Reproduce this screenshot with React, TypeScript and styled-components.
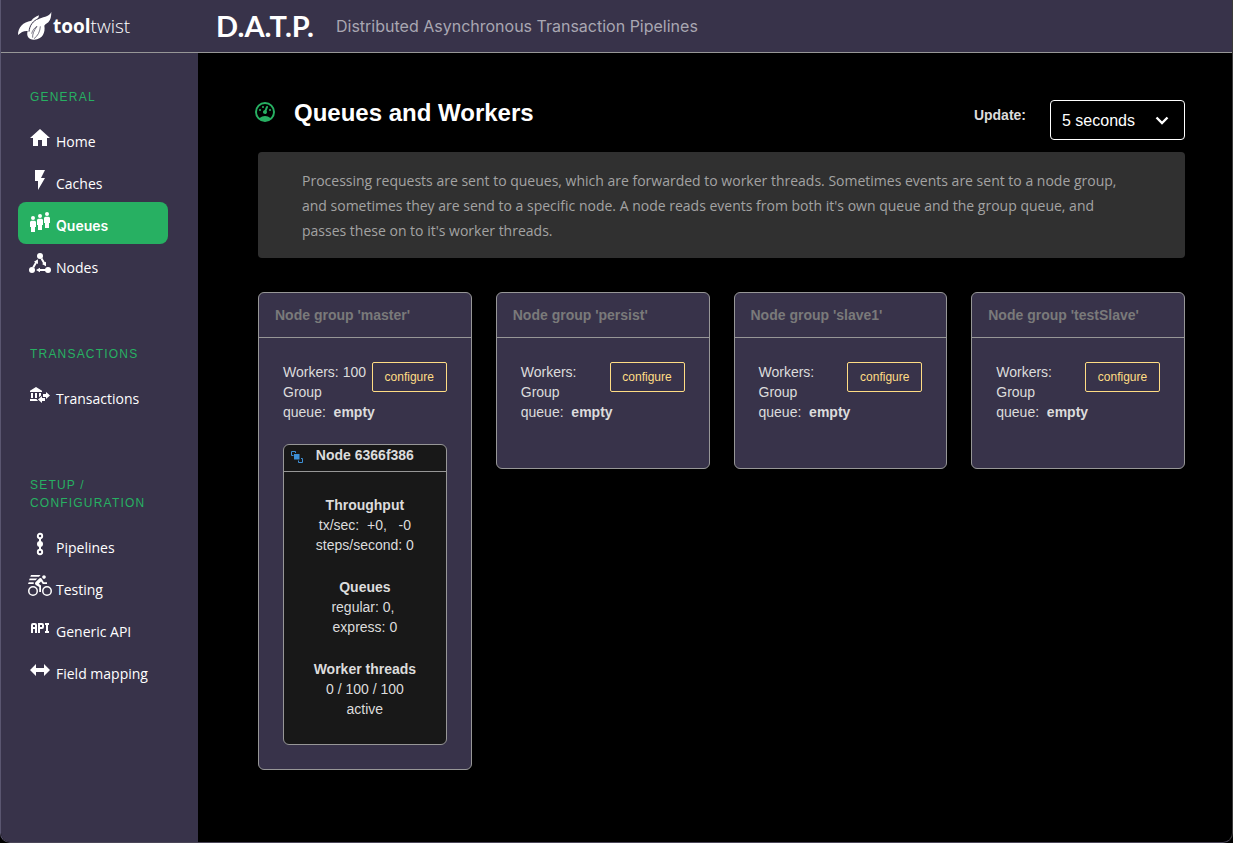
import React from 'react';
import styled, { createGlobalStyle } from 'styled-components';

const sans = '"Liberation Sans", Arial, sans-serif';
const humanist = '"Open Sans", "Noto Sans", sans-serif';
const purple = '#38334a';
const green = '#27b062';
const line = '#979797';

const GlobalStyle = createGlobalStyle`
  *, *::before, *::after { box-sizing: border-box; }
  html { background: #000; }
  body { margin: 0; font-family: ${sans}; font-size: 14px; line-height: 20px; color: #dcdcdc; }
  h1, h2, h3, h4, p, ul { margin: 0; padding: 0; font-size: inherit; }
`;

const Page = styled.div`
  display: flex;
  flex-direction: column;
  min-height: 100vh;
  background: #000;
  border-left: 1px solid #5a5670;
  border-right: 1px solid #3a3a3a;
  border-bottom: 1px solid #4a4658;
  border-radius: 0 0 10px 10px;
  overflow: hidden;
`;

const Header = styled.header`
  display: flex;
  align-items: center;
  height: 53px;
  padding-left: 16px;
  background: ${purple};
  border-bottom: 1px solid ${line};
`;

const Brand = styled.a`
  display: flex;
  align-items: center;
  gap: 1px;
  width: 199px;
  color: #fff;
  text-decoration: none;
  font-family: ${humanist};
  font-size: 19px;
  line-height: 24px;
  font-weight: 300;
  b { font-weight: 700; }
`;

const AppName = styled.span`
  color: #fff;
  font-family: Lato, sans-serif;
  font-size: 29px;
  line-height: 32px;
  font-weight: 700;
`;

const Tagline = styled.span`
  margin-left: 22px;
  color: #a9a7b2;
  font-family: Inter, sans-serif;
  font-size: 16px;
  line-height: 24px;
`;

const Body = styled.div`
  display: flex;
  flex: 1;
`;

const Sidebar = styled.nav`
  display: flex;
  flex-direction: column;
  gap: 59px;
  flex: 0 0 197px;
  padding: 35px 30px 35px 17px;
  background: ${purple};
`;

const GroupTitle = styled.h2`
  margin: 0 0 12px 12px;
  color: ${green};
  font-size: 12px;
  line-height: 18px;
  font-weight: 400;
  letter-spacing: 0.1em;
  text-transform: uppercase;
`;

const NavList = styled.ul`
  list-style: none;
`;

const NavLink = styled.a<{ $active?: boolean }>`
  display: flex;
  align-items: flex-start;
  gap: 4px;
  height: 42px;
  padding: 8px 10px;
  border-radius: 8px;
  background: ${p => (p.$active ? green : 'transparent')};
  color: #fff;
  text-decoration: none;
  font-family: ${p => (p.$active ? 'Inter, sans-serif' : humanist)};
  font-size: 14px;
  font-weight: ${p => (p.$active ? 600 : 400)};
  white-space: nowrap;
`;

const NavText = styled.span`
  margin-top: 6px;
`;

const Main = styled.main`
  flex: 1;
  min-width: 0;
  padding: 47px 47px 47px 60px;
`;

const TitleRow = styled.div`
  display: flex;
  align-items: flex-start;
  height: 52px;
`;

const GaugeIcon = styled.svg`
  margin: 0 17px 0 -5px;
`;

const Title = styled.h1`
  color: #fff;
  font-size: 24px;
  line-height: 26px;
  font-weight: 700;
`;

const UpdateLabel = styled.label`
  margin: 5px 24px 0 auto;
  font-weight: 700;
`;

const SelectBox = styled.div`
  position: relative;
  width: 135px;
  svg {
    position: absolute;
    right: 16px;
    top: 14px;
    pointer-events: none;
  }
`;

const Select = styled.select`
  appearance: none;
  width: 100%;
  height: 40px;
  padding: 0 11px;
  border: 1px solid #fff;
  border-radius: 4px;
  background: #000;
  color: #fff;
  font-family: ${sans};
  font-size: 16px;
`;

const Notice = styled.p`
  padding: 16px 44px 15px;
  border-radius: 4px;
  background: #303030;
  color: #a3a3a3;
  font-family: ${humanist};
  font-size: 14px;
  line-height: 25px;
`;

const Groups = styled.div`
  display: grid;
  grid-template-columns: repeat(4, 1fr);
  align-items: start;
  gap: 24px;
  margin-top: 34px;
`;

const GroupCard = styled.section`
  border: 1px solid ${line};
  border-radius: 6px;
  background: ${purple};
`;

const GroupHead = styled.h3`
  padding: 12px 16px;
  border-bottom: 1px solid ${line};
  color: #7a7a7a;
  font-weight: 700;
`;

const GroupBody = styled.div`
  padding: 24px;
`;

const Summary = styled.div`
  display: flex;
  justify-content: space-between;
  align-items: flex-start;
  margin-bottom: 22px;
`;

const Counts = styled.div`
  white-space: nowrap;
  width: 80px;
`;

const Configure = styled.button`
  width: 75px;
  height: 30px;
  padding: 0;
  border: 1px solid #ffdd84;
  border-radius: 2px;
  background: transparent;
  color: #ffdd84;
  font-family: ${sans};
  font-size: 12px;
`;

const NodeCard = styled.article`
  border: 1px solid ${line};
  border-radius: 6px;
  background: #181818;
  text-align: center;
`;

const NodeHead = styled.header`
  display: grid;
  grid-template-columns: 12px 1fr 12px;
  height: 27px;
  padding: 0 7px;
  border-bottom: 1px solid ${line};
  svg { margin-top: 6px; }
`;

const NodeBody = styled.div`
  display: flex;
  flex-direction: column;
  gap: 22px;
  padding: 23px 16px 25px;
`;

const Icon = ({ children }: { children: React.ReactNode }) => (
  <svg width="24" height="24" viewBox="0 0 24 24" fill="currentColor" aria-hidden="true">
    {children}
  </svg>
);

const person = (x: number, y: number) => (
  <g key={x} transform={`translate(${x} ${y})`}>
    <circle cx="0" cy="2" r="2" />
    <path d="M-1.500 4.800h3A1.500 1.500 0 0 1 3 6.300V11H2v5h-4v-5h-1V6.300A1.500 1.500 0 0 1-1.500 4.800Z" />
  </g>
);

const icons = {
  home: <path d="M10,20V14H14V20H19V12H22L12,3L2,12H5V20H10Z" />,
  flash: <path d="M7,2V13H10V22L17,10H13L17,2H7Z" />,
  queue: <>{[person(5, 6), person(12, 4), person(19, 2)]}</>,
  nodes: (
    <>
      <circle cx="12" cy="4" r="3" />
      <circle cx="4" cy="18" r="3" />
      <circle cx="20" cy="18" r="3" />
      <path
        d="M5.200 15.500L8.200 10.200M13.500 6.500L16.500 11.800M18 18H11"
        stroke="currentColor"
        strokeWidth="2"
        fill="none"
      />
      <path d="M9.900 7.200L10 12L6 9.700ZM18 14.300L14 12L18 9.700ZM8 18L12 15.700V20.300Z" />
    </>
  ),
  bank: (
    <path d="M15,14V11H18V9L22,12.5L18,16V14H15M14,7.7V9H2V7.7L8,4L14,7.7M7,10H9V15H7V10M3,10H5V15H3V10M13,10V12.5L11,14.3V10H13M9.1,16L8.5,16.5L10.2,18H2V16H9.1M17,15V18H14V20L10,16.5L14,13V15H17Z" />
  ),
  pipeline: (
    <>
      <circle cx="12" cy="4" r="2.2" fill="none" stroke="currentColor" strokeWidth="1.900" />
      <circle cx="12" cy="12" r="3" />
      <circle cx="12" cy="20" r="2.2" fill="none" stroke="currentColor" strokeWidth="1.900" />
      <path d="M11 6.500h2v11h-2z" />
    </>
  ),
  bike: (
    <path d="M5,20.5A3.5,3.5 0 0,1 1.5,17A3.5,3.5 0 0,1 5,13.5A3.5,3.5 0 0,1 8.5,17A3.5,3.5 0 0,1 5,20.5M5,12A5,5 0 0,0 0,17A5,5 0 0,0 5,22A5,5 0 0,0 10,17A5,5 0 0,0 5,12M14.8,10H19V8.2H15.8L13.86,4.93C13.57,4.43 13,4.1 12.4,4.1C11.93,4.1 11.5,4.29 11.2,4.6L7.5,8.29C7.19,8.6 7,9 7,9.5C7,10.13 7.33,10.66 7.85,10.97L11.2,13V18H13V11.5L10.75,9.85L13.07,7.5M19,20.5A3.5,3.5 0 0,1 15.5,17A3.5,3.5 0 0,1 19,13.5A3.5,3.5 0 0,1 22.5,17A3.5,3.5 0 0,1 19,20.5M19,12A5,5 0 0,0 14,17A5,5 0 0,0 19,22A5,5 0 0,0 24,17A5,5 0 0,0 19,12M16,4.8C17,4.8 17.8,4 17.8,3C17.8,2 17,1.2 16,1.2C15,1.2 14.2,2 14.2,3C14.2,4 15,4.8 16,4.8ZM3 1H12.500L11 2.800H2.300ZM1.700 4.500H9.300L7.500 6.300H1ZM.700 8.300H5.700V10H0Z" />
  ),
  api: (
    <path d="M7 7H5A2 2 0 0 0 3 9V17H5V13H7V17H9V9A2 2 0 0 0 7 7M7 11H5V9H7M14 7H10V17H12V13H14A2 2 0 0 0 16 11V9A2 2 0 0 0 14 7M14 11H12V9H14M20 9V15H21V17H17V15H18V9H17V7H21V9Z" />
  ),
  mapping: <path d="M8,14V18L2,12L8,6V10H16V6L22,12L16,18V14H8Z" />,
};

type NavItem = { icon: keyof typeof icons; text: string; active?: boolean };

const nav: { title: string; items: NavItem[] }[] = [
  {
    title: 'General',
    items: [
      { icon: 'home', text: 'Home' },
      { icon: 'flash', text: 'Caches' },
      { icon: 'queue', text: 'Queues', active: true },
      { icon: 'nodes', text: 'Nodes' },
    ],
  },
  { title: 'Transactions', items: [{ icon: 'bank', text: 'Transactions' }] },
  {
    title: 'Setup / Configuration',
    items: [
      { icon: 'pipeline', text: 'Pipelines' },
      { icon: 'bike', text: 'Testing' },
      { icon: 'api', text: 'Generic API' },
      { icon: 'mapping', text: 'Field mapping' },
    ],
  },
];

const groups: { name: string; workers?: number; node?: string }[] = [
  { name: 'master', workers: 100, node: '6366f386' },
  { name: 'persist' },
  { name: 'slave1' },
  { name: 'testSlave' },
];

const Logo = () => (
  <svg width="35" height="30" viewBox="0 0 105 90" fill="#fff" aria-hidden="true">
    <path d="M3 72C3 48 18 33 43 29C49 21 56 17 66 13C65 18 64 22 61 26C76 17 96 19 103 3C103 16 101 27 94 34C88 38 84 40 82 44C86 64 76 85 52 86C36 87 27 76 32 60C20 59 12 64 3 72Z" />
    <g fill="none" stroke={purple}>
      <path d="M65 22C48 30 38 42 36 62" strokeWidth="3" />
      <path d="M44 68C46 58 53 50 60 46C50 60 46 70 47 80" strokeWidth="2" />
      <path d="M70 46C69 62 63 74 51 83" strokeWidth="2" />
    </g>
  </svg>
);

const Node = ({ id }: { id: string }) => (
  <NodeCard>
    <NodeHead>
      <svg width="12" height="12" viewBox="0 0 12 12" fill="none" stroke="#3d8fd6" aria-hidden="true">
        <path d="M2.500 4.500H.500V.500H4.500V2M7.500 9.500V11.500H11.500V7.500H10" />
        <path d="M3 3H8.500V8.500H3Z" fill="#3d8fd6" stroke="none" />
      </svg>
      <b>Node {id}</b>
    </NodeHead>
    <NodeBody>
      <div>
        <b>Throughput</b>
        <div>tx/sec:&nbsp; +0, &nbsp; -0</div>
        <div>steps/second: 0</div>
      </div>
      <div>
        <b>Queues</b>
        <div>regular: 0,&nbsp;</div>
        <div>express: 0</div>
      </div>
      <div>
        <b>Worker threads</b>
        <div>0 / 100 / 100</div>
        <div>active</div>
      </div>
    </NodeBody>
  </NodeCard>
);

export default function App() {
  return (
    <Page>
      <GlobalStyle />
      <Header>
        <Brand href="#">
          <Logo />
          <span><b>tool</b>twist</span>
        </Brand>
        <AppName>D.A.T.P.</AppName>
        <Tagline>Distributed Asynchronous Transaction Pipelines</Tagline>
      </Header>
      <Body>
        <Sidebar>
          {nav.map(group => (
            <div key={group.title}>
              <GroupTitle>{group.title}</GroupTitle>
              <NavList>
                {group.items.map(item => (
                  <li key={item.text}>
                    <NavLink href="#" $active={item.active}>
                      <Icon>{icons[item.icon]}</Icon>
                      <NavText>{item.text}</NavText>
                    </NavLink>
                  </li>
                ))}
              </NavList>
            </div>
          ))}
        </Sidebar>
        <Main>
          <TitleRow>
            <GaugeIcon width="24" height="24" viewBox="0 0 24 24" fill={green} aria-hidden="true">
              <path d="M12,2A10,10 0 0,0 2,12A10,10 0 0,0 12,22A10,10 0 0,0 22,12A10,10 0 0,0 12,2M12,4A8,8 0 0,1 20,12C20,14.4 19,16.5 17.3,18C15.9,16.7 14,16 12,16C10,16 8.2,16.7 6.7,18C5,16.5 4,14.4 4,12A8,8 0 0,1 12,4M14,5.89C13.62,5.9 13.26,6.15 13.1,6.54L11.81,9.77L11.71,10C11,10.13 10.41,10.6 10.14,11.26C9.73,12.29 10.23,13.45 11.26,13.86C12.29,14.27 13.45,13.77 13.86,12.74C14.12,12.08 14,11.32 13.57,10.76L13.67,10.5L14.96,7.29L14.97,7.26C15.17,6.75 14.92,6.17 14.41,5.96C14.28,5.91 14.15,5.89 14,5.89M10,6A1,1 0 0,0 9,7A1,1 0 0,0 10,8A1,1 0 0,0 11,7A1,1 0 0,0 10,6M7,9A1,1 0 0,0 6,10A1,1 0 0,0 7,11A1,1 0 0,0 8,10A1,1 0 0,0 7,9M17,9A1,1 0 0,0 16,10A1,1 0 0,0 17,11A1,1 0 0,0 18,10A1,1 0 0,0 17,9Z" />
            </GaugeIcon>
            <Title>Queues and Workers</Title>
            <UpdateLabel htmlFor="interval">Update:</UpdateLabel>
            <SelectBox>
              <Select id="interval" defaultValue="5">
                <option value="5">5 seconds</option>
                <option value="10">10 seconds</option>
                <option value="30">30 seconds</option>
              </Select>
              <svg width="14" height="12" viewBox="0 0 14 12" fill="none" stroke="#fff" strokeWidth="2.400" aria-hidden="true">
                <path d="M1.500 3.500L7 9L12.500 3.500" />
              </svg>
            </SelectBox>
          </TitleRow>
          <Notice>
            Processing requests are sent to queues, which are forwarded to worker threads. Sometimes
            events are sent to a node group, and sometimes they are send to a specific node. A node
            reads events from both it's own queue and the group queue, and passes these on to it's
            worker threads.
          </Notice>
          <Groups>
            {groups.map(group => (
              <GroupCard key={group.name}>
                <GroupHead>Node group '{group.name}'</GroupHead>
                <GroupBody>
                  <Summary>
                    <Counts>
                      <div>Workers: {group.workers}</div>
                      <div>Group</div>
                      <div>queue:&nbsp; <b>empty</b></div>
                    </Counts>
                    <Configure type="button">configure</Configure>
                  </Summary>
                  {group.node && <Node id={group.node} />}
                </GroupBody>
              </GroupCard>
            ))}
          </Groups>
        </Main>
      </Body>
    </Page>
  );
}
